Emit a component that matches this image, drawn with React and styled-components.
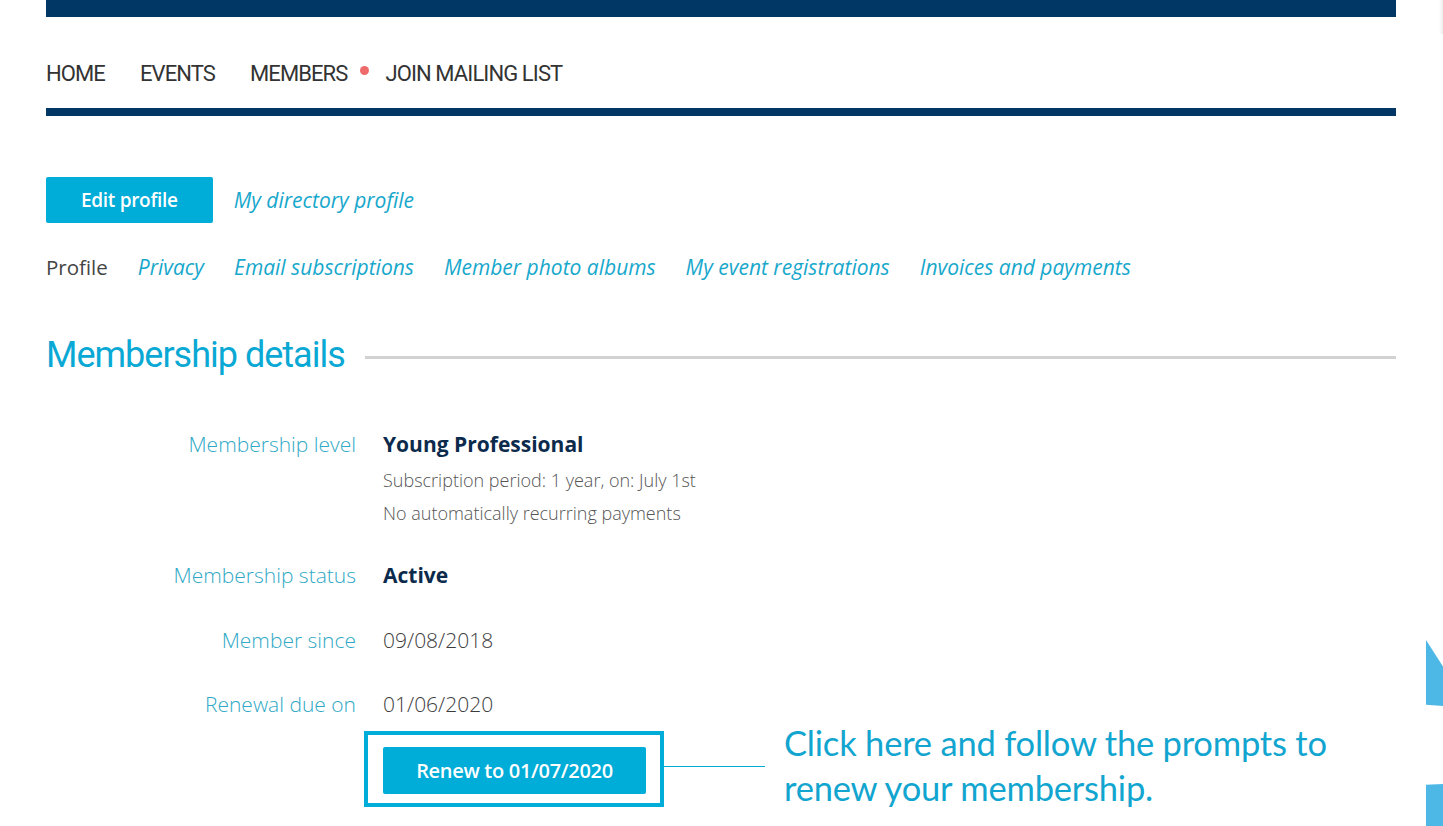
import React from 'react';
import styled, { createGlobalStyle } from 'styled-components';

const GlobalStyle = createGlobalStyle`
  html, body { margin: 0; padding: 0; background: #fff; }
  body { font-family: "Open Sans", "Liberation Sans", sans-serif; overflow: hidden; }
  * { box-sizing: border-box; }
`;

const Page = styled.div`
  position: relative;
  width: 1443px;
  height: 826px;
  overflow: hidden;
`;
const Wrap = styled.div`
  width: 1350px;
  margin-left: 46px;
`;
const TopBar = styled.div`
  height: 17px;
  background: #003764;
`;
const Nav = styled.nav`
  height: 99px;
  display: flex;
  align-items: center;
  padding-top: 21px;
  border-bottom: 8px solid #003764;
`;
const NavItem = styled.a`
  font-family: Roboto, "Liberation Sans", sans-serif;
  font-size: 22px;
  letter-spacing: -0.9px;
  color: #333;
  text-transform: uppercase;
  margin-right: ${(p) => (p.$gap ?? 35)}px;
`;
const Dot = styled.span`
  width: 9px;
  height: 9px;
  border-radius: 50%;
  background: #ef6b6b;
  margin-right: 16px;
  margin-top: -6px;
`;
const Actions = styled.div`
  display: flex;
  align-items: center;
  gap: 21px;
  margin-top: 61px;
`;
const PrimaryButton = styled.button`
  height: ${(p) => p.$h || 46}px;
  width: ${(p) => p.$w || 'auto'};
  padding: 0 ${(p) => p.$px ?? 35}px;
  border: none;
  border-radius: 2px;
  background: #00acd8;
  color: #fff;
  font-family: "Open Sans", sans-serif;
  font-weight: 600;
  font-size: ${(p) => p.$fs || 19}px;
  letter-spacing: -0.3px;
`;
const Link = styled.a`
  font-family: "Open Sans", sans-serif;
  font-style: italic;
  font-size: 21px;
  color: #17a8cc;
`;
const Tabs = styled.div`
  display: flex;
  align-items: center;
  gap: 30px;
  margin-top: 26px;
  height: 36px;
`;
const CurrentTab = styled.span`
  font-size: 20.5px;
  color: #444;
`;
const SectionHead = styled.div`
  display: flex;
  align-items: center;
  gap: 20px;
  margin-top: 50px;
  height: 40px;
`;
const Heading = styled.h2`
  margin: 0;
  font-family: Roboto, sans-serif;
  font-weight: 400;
  font-size: 36px;
  letter-spacing: -1px;
  color: #0aa8d4;
  white-space: nowrap;
`;
const Rule = styled.div`
  flex: 1;
  height: 3px;
  margin-top: 4px;
  background: #d2d2d2;
`;
const Details = styled.div`
  margin-top: 54px;
`;
const Row = styled.div`
  display: grid;
  grid-template-columns: 310px 1fr;
  column-gap: 27px;
  margin-bottom: ${(p) => p.$mb || 0}px;
`;
const Label = styled.div`
  text-align: right;
  font-size: 21px;
  font-weight: 300;
  line-height: 30px;
  color: #2fa9c6;
`;
const Strong = styled.div`
  font-size: 21px;
  font-weight: 700;
  line-height: 30px;
  color: #0c2b4c;
`;
const SubList = styled.div`
  margin-top: 5px;
`;
const Sub = styled.div`
  font-size: 18px;
  font-weight: 300;
  line-height: 33px;
  color: #555;
`;
const Value = styled.div`
  font-size: 21px;
  font-weight: 300;
  line-height: 30px;
  color: #3d3d3d;
`;
const CalloutRow = styled.div`
  display: flex;
  align-items: flex-start;
  margin-left: 318px;
  margin-top: 12px;
`;
const Highlight = styled.div`
  border: 4px solid #00acd8;
  padding: 12px 14px 9px 15px;
`;
const Connector = styled.div`
  width: 101px;
  height: 1px;
  margin-top: 35px;
  background: #00acd8;
`;
const Note = styled.p`
  margin: -11px 0 0 19px;
  font-family: Lato, "Open Sans", sans-serif;
  font-size: 34.5px;
  line-height: 45px;
  color: #12a5cf;
  letter-spacing: -0.2px;
`;
const EdgeShade = styled.div`
  position: absolute;
  top: 0;
  right: 0;
  width: 4px;
  height: 34px;
  background: linear-gradient(to right, #fff, #ececec);
`;
const EdgeBlob = styled.div`
  position: absolute;
  right: 0;
  top: ${(p) => p.$top}px;
  width: 17px;
  height: ${(p) => p.$h}px;
  background: #4db8e6;
  clip-path: ${(p) => p.$clip};
`;

export default function App() {
  return (
    <Page>
      <GlobalStyle />
      <Wrap>
        <TopBar />
        <Nav>
          <NavItem>Home</NavItem>
          <NavItem>Events</NavItem>
          <NavItem $gap={13}>Members</NavItem>
          <Dot />
          <NavItem>Join Mailing List</NavItem>
        </Nav>
        <Actions>
          <PrimaryButton>Edit profile</PrimaryButton>
          <Link>My directory profile</Link>
        </Actions>
        <Tabs>
          <CurrentTab>Profile</CurrentTab>
          <Link>Privacy</Link>
          <Link>Email subscriptions</Link>
          <Link>Member photo albums</Link>
          <Link>My event registrations</Link>
          <Link>Invoices and payments</Link>
        </Tabs>
        <SectionHead>
          <Heading>Membership details</Heading>
          <Rule />
        </SectionHead>
        <Details>
          <Row $mb={30}>
            <Label>Membership level</Label>
            <div>
              <Strong>Young Professional</Strong>
              <SubList>
                <Sub>Subscription period: 1 year, on: July 1st</Sub>
                <Sub>No automatically recurring payments</Sub>
              </SubList>
            </div>
          </Row>
          <Row $mb={35}>
            <Label>Membership status</Label>
            <Strong>Active</Strong>
          </Row>
          <Row $mb={34}>
            <Label>Member since</Label>
            <Value>09/08/2018</Value>
          </Row>
          <Row>
            <Label>Renewal due on</Label>
            <Value>01/06/2020</Value>
          </Row>
          <CalloutRow>
            <Highlight>
              <PrimaryButton $w="263px" $px={0} $fs={20} $h={47}>Renew to 01/07/2020</PrimaryButton>
            </Highlight>
            <Connector />
            <Note>
              Click here and follow the prompts to
              <br />
              renew your membership.
            </Note>
          </CalloutRow>
        </Details>
      </Wrap>
      <EdgeShade />
      <EdgeBlob $top={640} $h={66} $clip="polygon(0 0, 100% 40%, 100% 100%, 0 98%)" />
      <EdgeBlob $top={784} $h={42} $clip="polygon(0 2%, 100% 0, 100% 100%, 0 100%)" />
    </Page>
  );
}
